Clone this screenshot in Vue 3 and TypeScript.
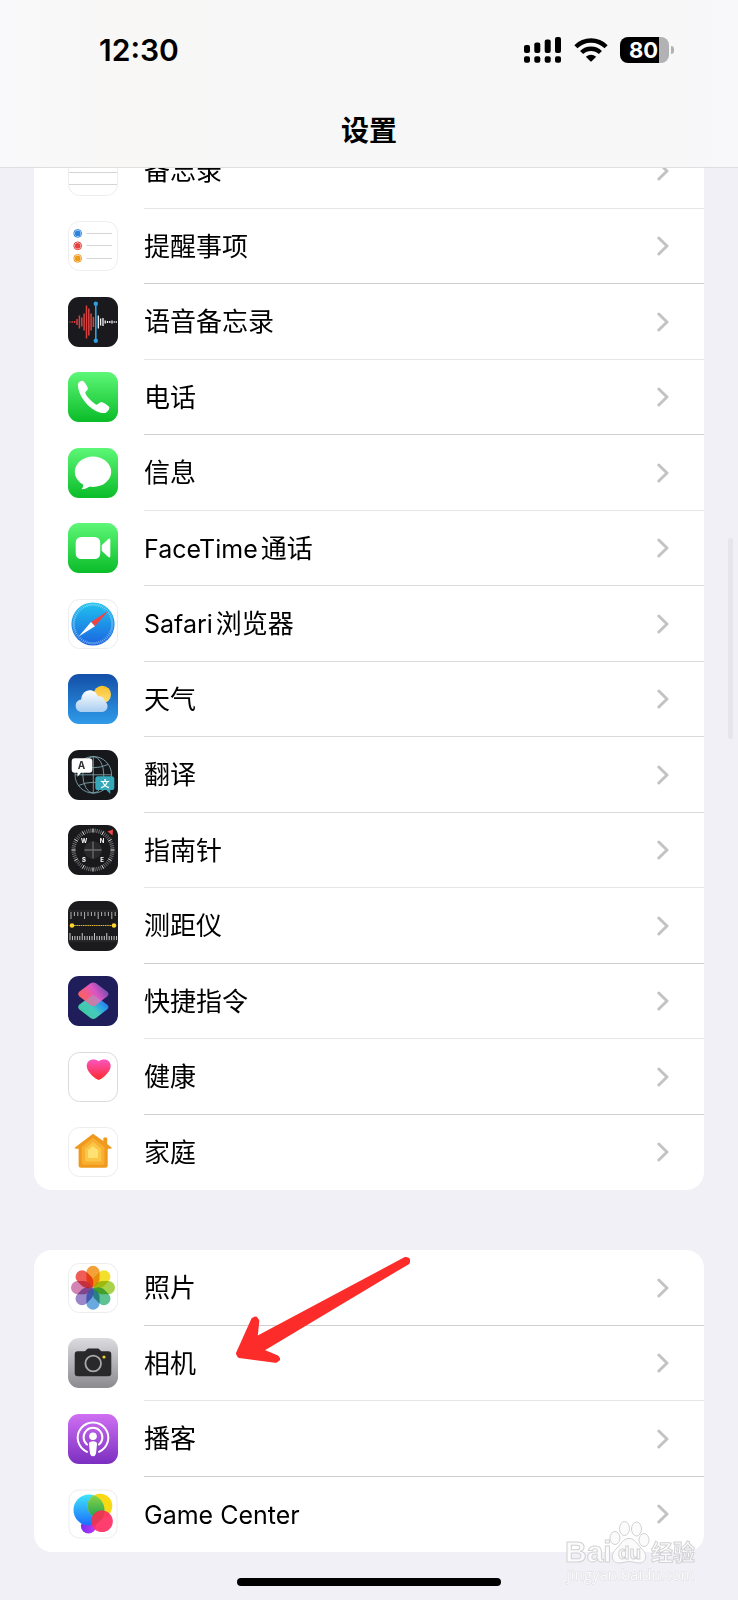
<script setup lang="ts">
interface Item {
  icon: string
  latin?: string
  label?: string
}

const polar = (r: number, deg: number): string => {
  const a = (deg * Math.PI) / 180
  return `${(25 + r * Math.sin(a)).toFixed(2)} ${(25 - r * Math.cos(a)).toFixed(2)}`
}

const ticks = (count: number, inner: number, outer: number): string =>
  Array.from({ length: count }, (_, i) => {
    const deg = (i * 360) / count
    return `M${polar(inner, deg)}L${polar(outer, deg)}`
  }).join('')

const bars = (list: [number, number][]): string =>
  list.map(([x, h]) => `M${x} ${25 - h / 2}v${h}`).join('')

const redWave = bars([[1.8, 1], [4.2, 1.5], [6.6, 2], [9, 6], [11.4, 13], [13.8, 9], [16.1, 17], [18.5, 33], [20.8, 27], [23.1, 17], [25.4, 10]])
const whiteWave = bars([[30.3, 13], [32.6, 7], [35, 8], [37.2, 3], [39.5, 2], [41.8, 2], [44, 3], [46.2, 1.5], [48.3, 1.5]])

const rulerTop = Array.from({ length: 14 }, (_, i) => `M${3 + i * 3.4} 11v${i % 4 === 0 ? 7 : 4}`).join('')
const rulerBottom = Array.from({ length: 20 }, (_, i) => `M${2 + i * 2.45} 39v-${i % 5 === 0 ? 7 : 4}`).join('')

const petals: string[] = ['#f5a13a', '#f2e02c', '#a8d24b', '#5fc294', '#6aa9de', '#9a86c8', '#d384b4', '#ee5d58']

const groups: Item[][] = [
  [
    { icon: 'notes', label: '备忘录' },
    { icon: 'reminders', label: '提醒事项' },
    { icon: 'voice', label: '语音备忘录' },
    { icon: 'phone', label: '电话' },
    { icon: 'messages', label: '信息' },
    { icon: 'facetime', latin: 'FaceTime', label: '通话' },
    { icon: 'safari', latin: 'Safari', label: '浏览器' },
    { icon: 'weather', label: '天气' },
    { icon: 'translate', label: '翻译' },
    { icon: 'compass', label: '指南针' },
    { icon: 'measure', label: '测距仪' },
    { icon: 'shortcuts', label: '快捷指令' },
    { icon: 'health', label: '健康' },
    { icon: 'home', label: '家庭' },
  ],
  [
    { icon: 'photos', label: '照片' },
    { icon: 'camera', label: '相机' },
    { icon: 'podcasts', label: '播客' },
    { icon: 'game', latin: 'Game Center' },
  ],
]
</script>

<template>
  <div class="screen">
    <svg class="sprite" aria-hidden="true">
      <defs>
        <linearGradient id="g-green" x1="0" y1="0" x2="0" y2="1"><stop offset="0" stop-color="#5df777" /><stop offset="1" stop-color="#0abc28" /></linearGradient>
        <linearGradient id="g-safari" x1="0" y1="0" x2="0" y2="1"><stop offset="0" stop-color="#1fc3f0" /><stop offset="1" stop-color="#1c63df" /></linearGradient>
        <linearGradient id="g-sky" x1="0" y1="0" x2="0" y2="1"><stop offset="0" stop-color="#134fa8" /><stop offset="1" stop-color="#2f9be9" /></linearGradient>
        <linearGradient id="g-cloud" x1="0" y1="0" x2="0" y2="1"><stop offset="0" stop-color="#ffffff" /><stop offset="1" stop-color="#a9cdf0" /></linearGradient>
        <linearGradient id="g-sun" x1="0" y1="0" x2="0" y2="1"><stop offset="0" stop-color="#fbc02c" /><stop offset="1" stop-color="#fde07a" /></linearGradient>
        <linearGradient id="g-heart" x1="0" y1="0" x2="0" y2="1"><stop offset="0" stop-color="#fb55c0" /><stop offset="1" stop-color="#fb2a2c" /></linearGradient>
        <linearGradient id="g-cam" x1="0" y1="0" x2="0" y2="1"><stop offset="0" stop-color="#dcdbe0" /><stop offset="1" stop-color="#8b8a8f" /></linearGradient>
        <linearGradient id="g-pod" x1="0" y1="0" x2="0" y2="1"><stop offset="0" stop-color="#cf6ff3" /><stop offset="1" stop-color="#7b2fc0" /></linearGradient>
        <linearGradient id="g-pink" x1="0.1" y1="0.8" x2="0.9" y2="0.4"><stop offset="0" stop-color="#fa6257" /><stop offset="0.35" stop-color="#f25b86" /><stop offset="0.65" stop-color="#dd55c4" /><stop offset="1" stop-color="#8a4fb4" /></linearGradient>
        <linearGradient id="g-teal" x1="0.1" y1="0.8" x2="0.9" y2="0.2"><stop offset="0" stop-color="#3fc9a0" /><stop offset="0.45" stop-color="#45c9bd" /><stop offset="0.75" stop-color="#2a9fe8" /><stop offset="1" stop-color="#2c6df0" /></linearGradient>
        <linearGradient id="g-ball" x1="0" y1="0" x2="0" y2="1"><stop offset="0" stop-color="#3fe4fb" /><stop offset="1" stop-color="#1c6dfb" /></linearGradient>
        <linearGradient id="g-yellow" x1="1" y1="0" x2="0" y2="1"><stop offset="0" stop-color="#ffd60a" /><stop offset="0.6" stop-color="#f4dc1c" /><stop offset="1" stop-color="#9fd02a" /></linearGradient>
        <linearGradient id="g-lime" x1="0" y1="0" x2="0" y2="1"><stop offset="0" stop-color="#8fd84a" /><stop offset="1" stop-color="#1fa04e" /></linearGradient>
        <linearGradient id="g-violet" x1="0" y1="0" x2="1" y2="0"><stop offset="0" stop-color="#7a2df0" /><stop offset="1" stop-color="#c03af5" /></linearGradient>
        <clipPath id="clip-ball"><circle cx="21" cy="21" r="15.5" /></clipPath>
      </defs>

      <symbol id="white-tile" viewBox="0 0 50 50"><rect x=".5" y=".5" width="49" height="49" rx="11" fill="#fff" stroke="#ededef" /></symbol>

      <symbol id="notes" viewBox="0 0 50 50">
        <use href="#white-tile" /><path d="M1 26.5h48M1 38.5h48" stroke="#d5d5d7" />
      </symbol>

      <symbol id="reminders" viewBox="0 0 50 50">
        <use href="#white-tile" />
        <g stroke-width="1" fill="none"><circle cx="9.7" cy="12.4" r="3.9" stroke="#2b83dc" /><circle cx="9.7" cy="24.8" r="3.9" stroke="#e44240" /><circle cx="9.7" cy="37.4" r="3.9" stroke="#ee9b1c" /></g>
        <circle cx="9.7" cy="12.4" r="2.9" fill="#2b83dc" /><circle cx="9.7" cy="24.8" r="2.9" fill="#e44240" /><circle cx="9.7" cy="37.4" r="2.9" fill="#ee9b1c" />
        <path d="M18.5 12.5H44M18.5 24.5H44M18.5 37.5H44" stroke="#d4d4d6" />
      </symbol>

      <symbol id="voice" viewBox="0 0 50 50">
        <rect width="50" height="50" rx="11" fill="#19191e" />
        <path :d="redWave" stroke="#d9413e" stroke-width="1.5" /><path :d="whiteWave" stroke="#f4f4f4" stroke-width="1.3" />
        <path d="M27.8 7v37" stroke="#2e9fe0" stroke-width="1.6" /><circle cx="27.8" cy="6.8" r="2.2" fill="#2e9fe0" /><circle cx="27.8" cy="43.8" r="2.2" fill="#2e9fe0" />
      </symbol>

      <symbol id="phone" viewBox="0 0 50 50">
        <rect width="50" height="50" rx="11" fill="url(#g-green)" />
        <path d="M9.9 12.5C10 10.5 12.8 8.6 14.4 8.8C16.2 9.2 19.6 14.6 19.9 16.4C20 18 17.3 19.2 17.2 21C18 24 25.5 31.5 28.5 32.700C30.300 32.700 31.600 30 33.300 30C35.200 30.200 40.600 33.600 41.300 35.300C41.700 37 39.500 40.400 37.300 41C33 41.600 26 39 20 33.200C13.500 26.700 9.700 18.500 9.900 12.500Z" fill="#fff" />
      </symbol>

      <symbol id="messages" viewBox="0 0 50 50">
        <rect width="50" height="50" rx="11" fill="url(#g-green)" />
        <ellipse cx="25" cy="23.7" rx="18.2" ry="15.2" fill="#fff" /><path d="M14.5 34C15.8 37 15.5 39 13.5 41.2C17.5 41.2 20 39.8 22 38Z" fill="#fff" />
      </symbol>

      <symbol id="facetime" viewBox="0 0 50 50">
        <rect width="50" height="50" rx="11" fill="url(#g-green)" />
        <rect x="7.700" y="14" width="24.500" height="22" rx="5.500" fill="#fff" /><path d="M33.700 22.300L40 16.200Q42.300 14.600 42.300 17V33Q42.300 35.400 40 33.700L33.700 27.700Z" fill="#fff" />
      </symbol>

      <symbol id="safari" viewBox="0 0 50 50">
        <use href="#white-tile" /><circle cx="25" cy="25" r="21.600" fill="url(#g-safari)" />
        <path :d="ticks(60, 18.2, 20.4)" stroke="#d8f0fc" stroke-width=".6" />
        <path d="M40.500 11.500L23 23L27 27.300Z" fill="#ee4444" /><path d="M10.700 37.600L23 23L27 27.300Z" fill="#fff" />
      </symbol>

      <symbol id="weather" viewBox="0 0 50 50">
        <rect width="50" height="50" rx="11" fill="url(#g-sky)" /><circle cx="34.300" cy="20.500" r="8.700" fill="url(#g-sun)" />
        <path d="M14 38C10 38 7.700 35 7.700 31.700C7.700 28.500 10 26 13.200 25.600C13.400 20 17.200 16.200 21.800 16.200C25.600 16.200 28.600 18.600 29.800 22.400C34 21.900 36.700 24.600 36.600 27.400C38.700 28.400 39.500 30.200 39.500 32.200C39.500 35.500 37 38 33.800 38Z" fill="url(#g-cloud)" />
      </symbol>

      <symbol id="translate" viewBox="0 0 50 50">
        <rect width="50" height="50" rx="11" fill="#17181c" />
        <g fill="none" stroke="#7ba3aa" stroke-width=".9"><circle cx="25.300" cy="24.800" r="18.300" /><ellipse cx="25.300" cy="24.800" rx="10.500" ry="18.300" /><path d="M25.300 6.500v36.600M7 24.800h36.600M10.500 14.500Q25.300 21 40 14.500M10.500 35.500Q25.300 29 40 35.500" /></g>
        <path d="M6.700 8.300h14.600a3 3 0 0 1 3 3v8.400a3 3 0 0 1-3 3H13l-3.500 4v-4H6.700a3 3 0 0 1-3-3v-8.400a3 3 0 0 1 3-3Z" fill="#fff" />
        <path d="M30 26.300h13.600a2.700 2.700 0 0 1 2.700 2.700v8.400a2.700 2.700 0 0 1-2.700 2.700H42.300v4l-4-4H30a2.700 2.700 0 0 1-2.700-2.700V29a2.700 2.700 0 0 1 2.700-2.700Z" fill="#35a8b9" />
        <text x="13.500" y="19" class="glyph" font-size="10" fill="#333">A</text><text x="37" y="37" class="glyph" font-size="9" fill="#fff">文</text>
      </symbol>

      <symbol id="compass" viewBox="0 0 50 50">
        <rect width="50" height="50" rx="11" fill="#19191b" /><path :d="ticks(60, 17.5, 21.5)" stroke="#8e8e90" stroke-width=".8" /><path :d="ticks(12, 17.5, 21.5)" stroke="#d8d8da" stroke-width=".9" />
        <circle cx="25" cy="25" r="9" fill="#29292b" /><path d="M16.500 25h17M25 16.500v17" stroke="#6a6a6c" stroke-width="1.300" />
        <path d="M45 4.500L44.500 10.500L39.500 6.500Z" fill="#ef4545" />
        <g class="glyph" font-size="6" fill="#fff"><text x="16" y="18">W</text><text x="34" y="18">N</text><text x="16" y="37">S</text><text x="34" y="37">E</text></g>
      </symbol>

      <symbol id="measure" viewBox="0 0 50 50">
        <rect width="50" height="50" rx="11" fill="#1b1b1d" /><path d="M0 10h50M0 40h50" stroke="#38383a" stroke-width=".8" />
        <path :d="rulerTop" stroke="#c4c4c6" stroke-width=".9" /><path :d="rulerBottom" stroke="#dcdcde" stroke-width=".9" />
        <path d="M4 24.500h42" stroke="#e8c22e" stroke-width="1.200" stroke-dasharray="1.500 .7" /><circle cx="4" cy="24.500" r="2.300" fill="#ffd52e" /><circle cx="46" cy="24.500" r="2.300" fill="#ffd52e" />
      </symbol>

      <symbol id="shortcuts" viewBox="0 0 50 50">
        <rect width="50" height="50" rx="11" fill="#1f1e5b" />
        <path d="M22.500 20.200Q25.300 18.600 28 20.200L39 28.500Q42 31 39 33.500L28 42Q25.300 44 22.500 42L11.500 33.500Q8.800 31 11.500 28.500Z" fill="url(#g-teal)" />
        <path d="M22.500 7.200Q25.300 5.600 28 7.200L39 15.500Q42 18 39 20.500L28 29Q25.300 31 22.500 29L11.500 20.500Q8.800 18 11.500 15.500Z" fill="url(#g-pink)" />
        <path d="M25.300 18.500L33.700 24.700L28 29Q25.300 31 22.500 29L17 24.700Z" fill="#9fa0c8" opacity=".5" />
      </symbol>

      <symbol id="health" viewBox="0 0 50 50">
        <rect x=".5" y=".5" width="49" height="49" rx="11" fill="#fff" stroke="#dadadc" />
        <path d="M30.700 28C28.800 28 18.700 20.500 18.700 14.300C18.700 10 21.500 7.400 25 7.400C27.500 7.400 29.500 8 30.700 9.200C31.900 8 33.900 7.400 36.400 7.400C39.900 7.400 42.700 10 42.700 14.300C42.700 20.500 32.600 28 30.700 28Z" fill="url(#g-heart)" />
      </symbol>

      <symbol id="home" viewBox="0 0 50 50">
        <use href="#white-tile" />
        <path d="M25 6.700L35.300 14V11.500Q35.300 10.500 36.300 10.500H38.200Q39.200 10.500 39.200 11.500V17L43.500 20.500Q44 21.700 42.700 21.700H39.700V38.500Q39.700 40.800 37.400 40.800H12.900Q10.600 40.800 10.600 38.500V21.700H7.500Q6.200 21.700 6.900 20.500Z" fill="#f09a1d" />
        <path d="M25 10.700L36.500 20V36Q36.500 37.700 34.800 37.700H15.500Q13.800 37.700 13.800 36V20Z" fill="#f7ae31" /><path d="M25 14.700L33.300 21.700V33Q33.300 34.500 31.800 34.500H18.500Q17 34.500 17 33V21.700Z" fill="#fbc546" /><path d="M25 19L30 23.300V29.500Q30 31 28.500 31H21.500Q20 31 20 29.500V23.300Z" fill="#ffe173" />
      </symbol>

      <symbol id="photos" viewBox="0 0 50 50">
        <use href="#white-tile" />
        <g class="flower"><path v-for="(c, i) in petals" :key="c" class="petal" d="M25 24.500C22 22 18.400 19.500 18.400 15.500V9.300A6.600 6.600 0 0 1 31.600 9.300V15.500C31.600 19.500 28 22 25 24.500Z" :fill="c" :transform="`rotate(${i * 45} 25 24.700)`" /></g>
      </symbol>

      <symbol id="camera" viewBox="0 0 50 50">
        <rect width="50" height="50" rx="11" fill="url(#g-cam)" />
        <path d="M9.700 13.300H16C18 13.300 18.500 10.400 20.800 10.400H29.500C31.800 10.400 32.300 13.300 34.300 13.300H40.300Q43.300 13.300 43.300 16.300V35.300Q43.300 38.300 40.300 38.300H9.700Q6.700 38.300 6.700 35.300V16.300Q6.700 13.300 9.700 13.300Z" fill="#29292b" />
        <circle cx="25.200" cy="25.500" r="7.800" fill="#29292b" stroke="#a9a9ab" stroke-width="1.800" /><circle cx="36" cy="19" r="1.600" fill="#f6cd28" />
      </symbol>

      <symbol id="podcasts" viewBox="0 0 50 50">
        <rect width="50" height="50" rx="11" fill="url(#g-pod)" />
        <g fill="none" stroke="#fff" stroke-linecap="round" stroke-width="2"><path d="M19 37.800A15.300 15.300 0 1 1 31 37.800" /><path d="M19 30.500A9.400 9.400 0 1 1 31 30.500" /></g>
        <circle cx="25" cy="22.300" r="3.800" fill="#fff" /><path d="M21 30Q21 27.300 25 27.300T29 30L28 39.500Q27.500 42.200 25 42.200T22 39.500Z" fill="#fff" />
      </symbol>

      <symbol id="game" viewBox="0 0 50 50">
        <rect x="1" y="1" width="48" height="48" rx="10" fill="#fff" stroke="#ededef" />
        <circle cx="20.500" cy="37" r="7.600" fill="url(#g-violet)" /><circle cx="21" cy="21" r="15.500" fill="url(#g-ball)" /><circle cx="32" cy="17" r="12.300" fill="url(#g-yellow)" />
        <circle cx="32" cy="17" r="12.300" fill="url(#g-lime)" clip-path="url(#clip-ball)" />
        <circle cx="34" cy="32.300" r="10.800" fill="#fd2f63" opacity=".93" /><circle cx="34" cy="32.300" r="10.800" fill="#e03a42" opacity=".5" clip-path="url(#clip-ball)" />
      </symbol>
    </svg>

    <header class="top">
      <div class="status">
        <time class="clock">12:30</time>
        <div class="indicators">
          <svg width="38" height="26" viewBox="0 0 38 26" role="img" aria-label="信号">
            <rect x="0" y="8" width="6" height="8" rx="2" /><rect x="10.300" y="5.500" width="6" height="10.500" rx="2" /><rect x="20.700" y="2.500" width="6" height="13.500" rx="2" /><rect x="31" y="0" width="6" height="16" rx="2" />
            <rect x="0" y="19.300" width="6" height="6.500" rx="2" /><rect x="10.300" y="19.300" width="6" height="6.500" rx="2" /><rect x="20.700" y="19.300" width="6" height="6.500" rx="2" /><rect x="31" y="19.300" width="6" height="6.500" rx="2" />
          </svg>
          <svg width="34" height="26" viewBox="0 0 34 26" role="img" aria-label="Wi-Fi">
            <g fill="none" stroke="#000" stroke-width="4.400"><path d="M1.900 9.700A21.500 21.500 0 0 1 32.100 9.700" /><path d="M7.600 15.500A13.500 13.500 0 0 1 26.400 15.500" /></g><path d="M11.800 19.700Q17 15.600 22.200 19.700L17.700 24.300Q17 24.900 16.300 24.300Z" />
          </svg>
          <div class="battery"><span class="level">80</span></div>
        </div>
      </div>
      <h1>设置</h1>
    </header>

    <main>
      <ul v-for="(group, g) in groups" :key="g" class="card" :class="g === 0 ? 'apps' : 'media'">
        <li v-for="item in group" :key="item.icon">
          <a href="#">
            <svg class="icon" viewBox="0 0 50 50" aria-hidden="true"><use :href="`#${item.icon}`" /></svg>
            <span class="label"><span v-if="item.latin" class="latin">{{ item.latin }}</span>{{ item.label }}</span>
            <svg class="chevron" viewBox="0 0 12 20" aria-hidden="true"><path d="M1.800 2L10 10L1.800 18" /></svg>
          </a>
        </li>
        <li v-if="g === 1" class="pointer" aria-hidden="true">
          <svg width="190" height="120" viewBox="0 0 190 120"><path d="M8.500 103.500L23.500 70L25.500 69L26.800 71L24.800 90L175.500 9.500L177.500 10L177.500 12L29.500 100.500L46.500 107.500L47.500 109L45.500 110.300L9.500 105.500Z" /></svg>
        </li>
      </ul>
    </main>

    <footer><div class="home-bar"></div></footer>
    <div class="scrollbar"></div>

    <svg class="watermark" viewBox="0 0 140 72" role="img" aria-label="Baidu 经验">
      <g class="paw"><ellipse cx="54" cy="20" rx="5" ry="6.500" /><ellipse cx="63.500" cy="10.500" rx="5" ry="7" /><ellipse cx="75.500" cy="11" rx="5" ry="7" /><ellipse cx="83" cy="22" rx="5" ry="6.500" /><path d="M68 20.500C74 20.500 76 26 80 30C88 37 85 45 78 45C74 45 72 43.500 68 43.500S62 45 58 45C51 45 48 37 56 30C60 26 62 20.500 68 20.500Z" /></g>
      <text x="4" y="44" class="mark" font-size="30">Bai</text><text x="57" y="41" class="mark" font-size="19">du</text><text x="90" y="42" class="mark" font-size="22">经验</text>
      <text x="6" y="62" class="site" font-size="15">jingyan.baidu.com</text>
    </svg>
  </div>
</template>

<style>
body {
  background: #f1f0f6;
}
</style>

<style scoped>
.screen {
  position: relative;
  overflow: hidden;
  background: #f1f0f6;
  color: #000;
  font-family: Inter, 'Noto Sans CJK SC', sans-serif;
}

.sprite {
  position: absolute;
  width: 0;
  height: 0;
}

.glyph {
  font-family: Inter, 'Noto Sans CJK SC', sans-serif;
  font-weight: 700;
  text-anchor: middle;
}

.flower {
  isolation: isolate;
}

.petal {
  mix-blend-mode: multiply;
}

.top {
  position: relative;
  z-index: 1;
  box-sizing: border-box;
  height: 168px;
  padding: 30px 64px 0 99px;
  background: linear-gradient(90deg, #f9f9fb, #f8f7f6 16%, #f7f7f7 32%, #f7f7f7 88%, #f8f8fb);
  border-bottom: 1px solid #dfdfe1;
}

.status {
  display: flex;
  align-items: center;
  justify-content: space-between;
  height: 40px;
}

.clock {
  font-size: 30px;
  font-weight: 600;
  line-height: 40px;
}

.indicators {
  display: flex;
  align-items: center;
  gap: 12px;
}

.battery {
  position: relative;
  width: 49px;
  height: 26px;
  margin-right: 5px;
  border-radius: 8px;
  background: linear-gradient(90deg, #000 39px, #b2b2b4 39px);
}

.battery::after {
  content: '';
  position: absolute;
  top: 9px;
  right: -5px;
  width: 3px;
  height: 8px;
  border-radius: 0 4px 4px 0;
  background: #b2b2b4;
}

.level {
  display: block;
  padding-left: 9px;
  color: #fff;
  font-size: 22px;
  font-weight: 700;
  line-height: 26px;
}

h1 {
  margin: 41px 0 0;
  padding-right: 35px;
  text-align: center;
  font-size: 28px;
  font-weight: 700;
  line-height: 40px;
}

main {
  display: flex;
  flex-direction: column;
  gap: 60px;
  margin-top: -35px;
  padding: 0 34px;
}

.card {
  position: relative;
  margin: 0;
  padding: 0;
  list-style: none;
  background: #fff;
  border-radius: 18px;
}

.card a {
  display: flex;
  align-items: center;
  height: 76px;
  padding-left: 34px;
  color: inherit;
  text-decoration: none;
}

.card li:nth-child(even) a {
  height: 75px;
}

.card li {
  background: linear-gradient(#e6e6e8, #e6e6e8) 110px 100% / 100% 1px no-repeat;
}

.apps li:nth-child(n + 6):nth-child(-n + 9) {
  background-image: linear-gradient(#dadadc, #dadadc);
}

.apps li:nth-child(2),
.apps li:nth-child(4),
.apps li:nth-child(11),
.apps li:nth-child(13),
.media li:nth-child(odd) {
  background-image: linear-gradient(#cecfd1, #cecfd1);
}

.apps li:last-child,
.media li:nth-child(n + 4) {
  background: none;
}

.icon {
  flex: none;
  width: 50px;
  height: 50px;
  margin-bottom: 1px;
}

.label {
  flex: 1;
  margin-left: 26px;
  font-size: 26px;
  line-height: 36px;
}

.latin {
  margin-right: 3px;
  font-size: 25px;
}

.chevron {
  width: 12px;
  height: 20px;
  margin: 0 35px 1px 0;
  fill: none;
  stroke: #c3c3c5;
  stroke-width: 3;
  stroke-linecap: round;
  stroke-linejoin: round;
}

.pointer {
  position: absolute;
  top: 0;
  left: 196px;
  pointer-events: none;
}

.pointer path {
  fill: #fc2c2a;
  stroke: #fc2c2a;
  stroke-width: 5;
  stroke-linejoin: round;
}

footer {
  padding: 26px 0 14px;
}

.home-bar {
  width: 264px;
  height: 8px;
  margin: 0 auto;
  border-radius: 4px;
  background: #000;
}

.scrollbar {
  position: absolute;
  top: 538px;
  right: 5px;
  width: 5px;
  height: 201px;
  border-radius: 3px;
  background: #e6e5ea;
}

.watermark {
  position: absolute;
  right: 37px;
  bottom: 10px;
  width: 140px;
  height: 72px;
}

.paw,
.mark {
  fill: #fbfbfc;
  stroke: #d2d2d4;
  stroke-width: 1;
}

.mark {
  font-family: 'Liberation Sans', 'Noto Sans CJK SC', sans-serif;
  font-weight: 700;
}

.site {
  font-family: 'Open Sans', sans-serif;
  fill: #fbfbfc;
  stroke: #dcdce0;
  stroke-width: 1;
  paint-order: stroke;
}
</style>
